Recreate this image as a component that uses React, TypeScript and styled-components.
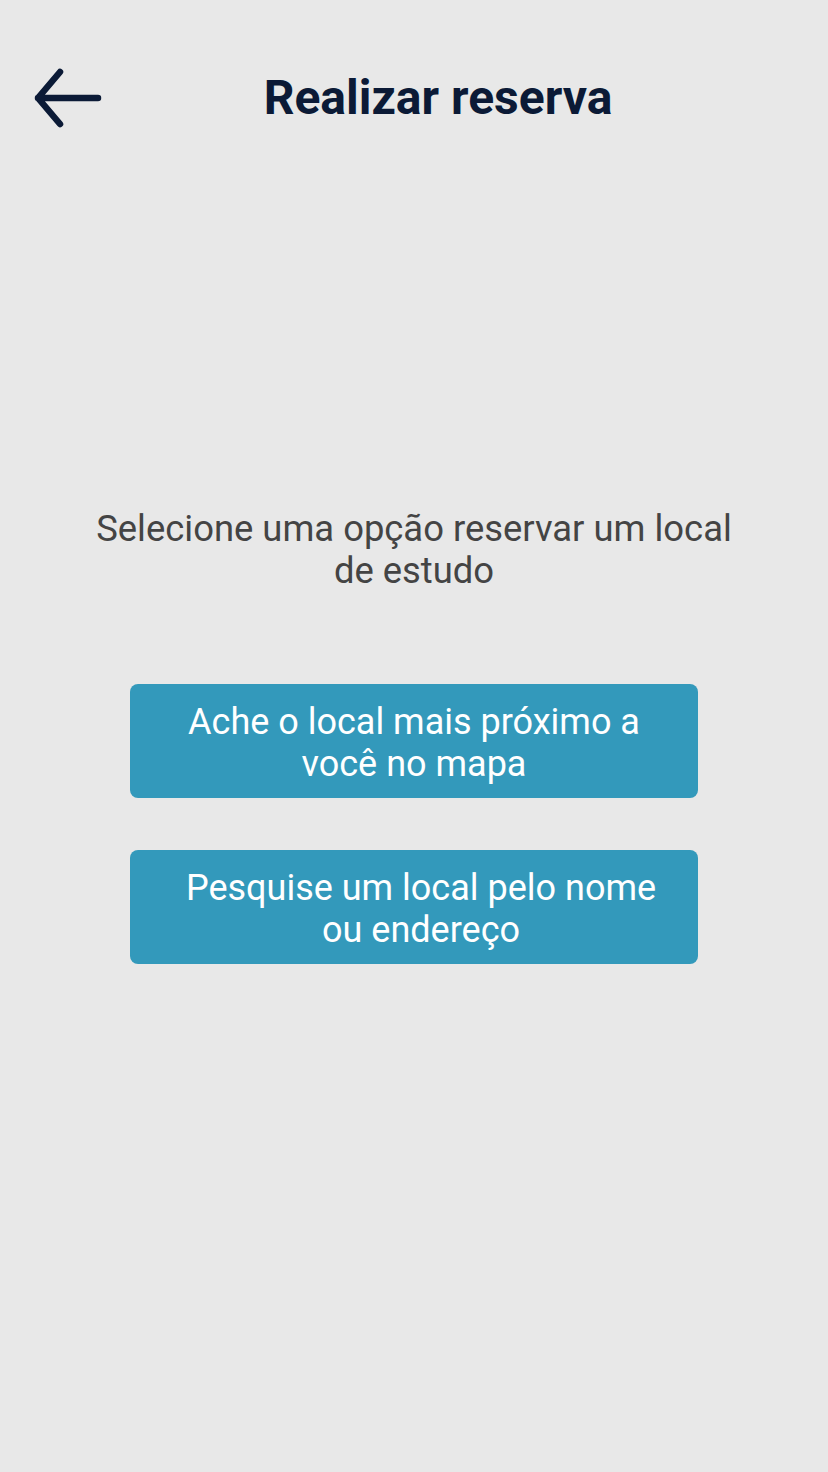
import React from "react";
import styled, { createGlobalStyle } from "styled-components";

const Global = createGlobalStyle`
  html, body { margin: 0; padding: 0; background: #e8e8e8; }
  body { font-family: Roboto, "Noto Sans", sans-serif; }
`;

const Screen = styled.div`
  width: 828px;
  height: 1472px;
  background: #e8e8e8;
  display: flex;
  flex-direction: column;
  align-items: center;
`;

const Header = styled.header`
  width: 100%;
  height: 196px;
  display: grid;
  grid-template-columns: 130px 1fr 82px;
  align-items: start;
  padding-top: 66px;
  box-sizing: border-box;
`;

const BackButton = styled.button`
  background: none;
  border: none;
  padding: 0;
  margin-left: 32px;
  width: 70px;
  height: 64px;
  cursor: pointer;
  display: flex;
`;

const Title = styled.h1`
  margin: 0;
  font-family: Roboto, sans-serif;
  font-weight: 700;
  font-size: 48px;
  line-height: 64px;
  color: #0b1a36;
  text-align: center;
  white-space: nowrap;
`;

const Prompt = styled.p`
  margin: 312px 0 0;
  width: 680px;
  font-size: 36.4px;
  line-height: 42px;
  color: #444444;
  text-align: center;
`;

const Options = styled.div`
  margin-top: 92px;
  display: flex;
  flex-direction: column;
  gap: 52px;
`;

const OptionButton = styled.button<{ $shift?: number }>`
  width: 568px;
  height: 114px;
  border: none;
  border-radius: 8px;
  background: #3399bb;
  color: #ffffff;
  font-family: Roboto, sans-serif;
  font-weight: 400;
  font-size: 36px;
  line-height: 42px;
  text-align: center;
  padding: 4px 20px 0 ${(p) => 20 + (p.$shift ?? 0)}px;
  cursor: pointer;
`;

export default function App() {
  return (
    <Screen>
      <Global />
      <Header>
        <BackButton aria-label="Voltar">
          <svg width="70" height="64" viewBox="0 0 70 64">
            <path
              d="M6 32 H66 M28 6 L6 32 L28 58"
              fill="none"
              stroke="#0b1a36"
              strokeWidth="6.5"
              strokeLinecap="round"
              strokeLinejoin="round"
            />
          </svg>
        </BackButton>
        <Title>Realizar reserva</Title>
        <div />
      </Header>
      <Prompt>Selecione uma opção reservar um local de estudo</Prompt>
      <Options>
        <OptionButton>Ache o local mais próximo a você no mapa</OptionButton>
        <OptionButton $shift={14}>Pesquise um local pelo nome ou endereço</OptionButton>
      </Options>
    </Screen>
  );
}
